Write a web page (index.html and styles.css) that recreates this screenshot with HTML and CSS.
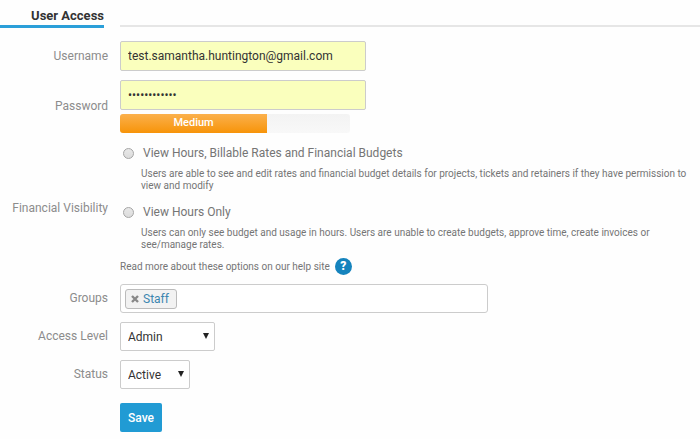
FILE: index.html
```html
<!DOCTYPE html>
<html lang="en">
<head>
    <meta charset="UTF-8">
    <meta name="viewport" content="width=device-width, initial-scale=1.0">
    <title>User Access</title>
    <link rel="stylesheet" href="styles.css">
</head>
<body>
    <form class="user-access">
        <div class="section-header">
            <h2>User Access</h2>
            <div class="rule"></div>
        </div>

        <div class="row">
            <label class="row-label" for="username">Username</label>
            <input class="text-input" type="text" id="username" value="test.samantha.huntington@gmail.com">
        </div>

        <div class="row">
            <label class="row-label" for="password">Password</label>
            <div class="password-field">
                <input class="text-input" type="password" id="password" value="abcdefghijkl">
                <div class="strength">
                    <div class="strength-bar" style="width: 64%">Medium</div>
                </div>
            </div>
        </div>

        <div class="row visibility-row" role="radiogroup" aria-labelledby="visibilityLabel">
            <span class="row-label" id="visibilityLabel">Financial Visibility</span>
            <div class="visibility">
                <div class="option">
                    <input type="radio" name="visibility" id="viewAll">
                    <label for="viewAll">View Hours, Billable Rates and Financial Budgets</label>
                    <p>Users are able to see and edit rates and financial budget details for projects, tickets and retainers if they have permission to view and modify</p>
                </div>
                <div class="option">
                    <input type="radio" name="visibility" id="viewHours">
                    <label for="viewHours">View Hours Only</label>
                    <p>Users can only see budget and usage in hours. Users are unable to create budgets, approve time, create invoices or see/manage rates.</p>
                </div>
                <div class="help">
                    <span>Read more about these options on our help site</span>
                    <a class="help-link" href="#">?</a>
                </div>
            </div>
        </div>

        <div class="row">
            <label class="row-label" for="groups">Groups</label>
            <div class="tags">
                <span class="tag">
                    <button type="button" class="tag-remove" aria-label="Remove">
                        <svg width="8" height="8" viewBox="0 0 8 8"><path d="M1 1l6 6M7 1L1 7" stroke="#888" stroke-width="2.4"/></svg>
                    </button>
                    Staff
                </span>
                <input type="text" id="groups">
            </div>
        </div>

        <div class="row">
            <label class="row-label" for="accessLevel">Access Level</label>
            <div class="select access-level">
                <select id="accessLevel">
                    <option>Admin</option>
                </select>
                <svg class="arrow" width="6" height="6" viewBox="0 0 6 6"><path d="M0 0h6L3 6z"/></svg>
            </div>
        </div>

        <div class="row">
            <label class="row-label" for="status">Status</label>
            <div class="select status">
                <select id="status">
                    <option>Active</option>
                </select>
                <svg class="arrow" width="6" height="6" viewBox="0 0 6 6"><path d="M0 0h6L3 6z"/></svg>
            </div>
        </div>

        <div class="row actions">
            <span></span>
            <button type="submit" class="save">Save</button>
        </div>
    </form>
</body>
</html>
```
FILE: styles.css
```css
* {
    box-sizing: border-box;
}

body {
    margin: 0;
    font-family: Roboto, Arial, sans-serif;
    font-size: 12px;
    line-height: 16px;
    color: #757575;
    background: #fefefe;
}

input, select, button {
    font: inherit;
}

.user-access {
    display: flex;
    flex-direction: column;
    gap: 9px;
    padding-top: 8px;
}

/* heading */
.section-header {
    display: grid;
    grid-template-columns: 104px 1fr;
    column-gap: 16px;
    margin-bottom: 4px;
}

h2 {
    margin: 0;
    padding-bottom: 1px;
    border-bottom: 3px solid #2b9fd9;
    font-size: 13px;
    line-height: 16px;
    font-weight: 700;
    text-align: right;
    color: #333;
}

.rule {
    margin-bottom: 1px;
    border-bottom: 2px solid #e6e6e6;
}

/* form rows */
.row {
    display: grid;
    grid-template-columns: 108px 1fr;
    column-gap: 12px;
    align-items: center;
    justify-items: start;
}

.row-label {
    justify-self: end;
    padding-bottom: 1px;
    color: #8c8c8c;
    white-space: nowrap;
}

.text-input {
    display: block;
    width: 246px;
    height: 30px;
    padding: 0 7px;
    border: 1px solid #ccc;
    border-radius: 2px;
    background: #faffbd;
    color: #333;
}

.strength {
    width: 230px;
    height: 19px;
    margin-top: 4px;
    border-radius: 3px;
    background: linear-gradient(#f3f3f3, #f8f8f8);
    overflow: hidden;
}

.strength-bar {
    height: 100%;
    background: linear-gradient(#fbb04c, #f79409);
    color: #fff;
    font-size: 11px;
    font-weight: 500;
    line-height: 18px;
    text-align: center;
}

/* financial visibility */
.visibility-row {
    margin-top: 3px;
}

.visibility-row .row-label {
    padding-bottom: 4px;
}

.visibility {
    max-width: 576px;
}

.option {
    display: grid;
    grid-template-columns: 11px 1fr;
    column-gap: 9px;
    align-items: center;
    padding-left: 3px;
}

.option + .option {
    margin-top: 12px;
}

.option input {
    appearance: none;
    width: 11px;
    height: 11px;
    margin: 0;
    border: 1px solid #a5a5a5;
    border-radius: 50%;
    background: linear-gradient(#e8e8e8, #dcdcdc);
}

.option input:checked {
    background: radial-gradient(#333 30%, #e0e0e0 40%);
}

.option p {
    grid-column: 1 / -1;
    margin: 7px 0 0;
    padding-left: 18px;
    font-size: 10px;
    line-height: 12px;
}

.help {
    display: flex;
    align-items: center;
    gap: 5px;
    margin-top: 7px;
    font-size: 10px;
}

.help-link {
    width: 17px;
    height: 17px;
    border-radius: 50%;
    background: #1583bd;
    color: #fff;
    font-size: 12px;
    line-height: 17px;
    font-weight: 900;
    text-align: center;
    text-decoration: none;
}

/* groups */
.tags {
    display: flex;
    align-items: center;
    width: 100%;
    max-width: 368px;
    height: 29px;
    padding: 0 4px;
    border: 1px solid #ccc;
    border-radius: 3px;
    background: #fff;
}

.tags input {
    flex: 1;
    min-width: 0;
    border: none;
    outline: none;
    background: none;
}

.tag {
    display: flex;
    align-items: center;
    gap: 4px;
    height: 20px;
    padding: 0 7px 0 5px;
    border: 1px solid #bbb;
    border-radius: 3px;
    background: #f2f2f2;
    color: #3c86b0;
}

.tag-remove {
    display: flex;
    padding: 1px 0 0;
    border: none;
    background: none;
    cursor: pointer;
}

/* drop-downs */
.select {
    position: relative;
}

.select select {
    display: block;
    appearance: none;
    width: 100%;
    height: 29px;
    padding: 0 7px;
    border: 1px solid #ccc;
    border-radius: 2px;
    background: #fff;
    color: #333;
}

.access-level {
    width: 95px;
}

.status {
    width: 70px;
}

.arrow {
    position: absolute;
    top: 11px;
    right: 6px;
    fill: #222;
    pointer-events: none;
}

.actions {
    margin-top: 5px;
}

.save {
    height: 29px;
    padding: 0 8px;
    border: none;
    border-radius: 2px;
    background: #219bd4;
    color: #fff;
    font-weight: 500;
    cursor: pointer;
}

.save:hover {
    background: #1a87ba;
}
```
